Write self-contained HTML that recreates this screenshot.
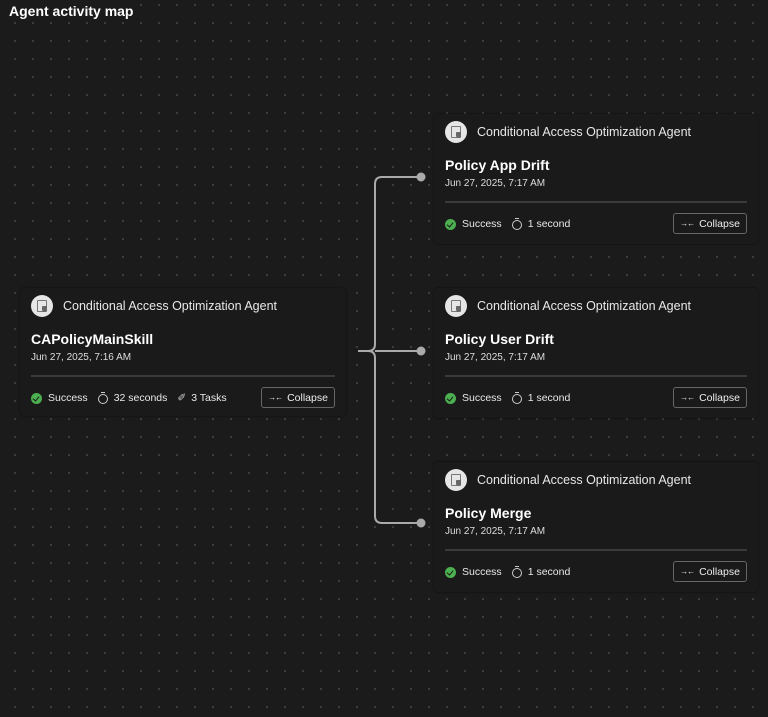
<!DOCTYPE html>
<html><head><style>
body{margin:0;width:768px;height:717px;overflow:hidden;background:#1c1b1b;font-family:"Liberation Sans",sans-serif;color:#fff;position:relative;
background-image:radial-gradient(circle,#444 0.8px,transparent 1.2px);background-size:18px 18px;background-position:6px 32px}
h1{position:absolute;left:9px;top:3px;margin:0;font-size:14px;font-weight:bold;background:#1c1b1b}
.card{position:absolute;background:#1a1a1a;border-radius:4px;box-shadow:0 0 2px rgba(0,0,0,.6)}
.agent{position:absolute;left:11px;top:7px;display:flex;align-items:center;font-size:12.5px;color:#e8e8e8}
.ic{width:22px;height:22px;border-radius:50%;background:#e6e6e6;margin-right:10px;position:relative}
.ic:before{content:"";position:absolute;left:6px;top:5px;width:8px;height:10px;border:1px solid #777;border-radius:1px}
.ic:after{content:"";position:absolute;left:11px;top:11px;width:5px;height:6px;background:#666;border-radius:1px 1px 3px 3px}
.title{position:absolute;left:11px;top:43px;font-size:14px;font-weight:bold}
.date{position:absolute;left:11px;top:64px;font-size:10px;color:#ddd}
.hr{position:absolute;left:11px;right:11px;top:87px;height:2px;background:#3a3a3a}
.foot{position:absolute;left:11px;top:104px;display:flex;align-items:center;font-size:10.5px;color:#e8e8e8}
.ok{width:11px;height:11px;border-radius:50%;background:#4caf50;margin-right:6px;position:relative}
.ok:after{content:"";position:absolute;left:3px;top:2px;width:3px;height:5px;border:solid #1a1a1a;border-width:0 1.3px 1.3px 0;transform:rotate(40deg)}
.tm{width:8px;height:8px;border:1.2px solid #ccc;border-radius:50%;margin:1px 6px 0 10px;position:relative}
.tm:before{content:"";position:absolute;left:2px;top:-3px;width:4px;height:1.2px;background:#ccc}
.btn{position:absolute;right:11px;top:99px;height:21px;width:74px;box-sizing:border-box;border:1px solid #666;border-radius:3px;font-size:10.5px;display:flex;align-items:center;justify-content:center;color:#eee}
.btn span{font-size:8px;margin-right:5px;letter-spacing:-1px}
</style></head><body>
<h1>Agent activity map</h1>
<svg style="position:absolute;left:0;top:0" width="768" height="717">
<path d="M358 351 H368 Q375 351 375 344 V184 Q375 177 382 177 H421 M368 351 Q375 351 375 358 V516 Q375 523 382 523 H421 M375 351 H421" fill="none" stroke="#aaa" stroke-width="2"/>
<circle cx="421" cy="177" r="4.5" fill="#aaa"/><circle cx="421" cy="351" r="4.5" fill="#aaa"/><circle cx="421" cy="523" r="4.5" fill="#aaa"/>
</svg>
<div class="card" style="left:20px;top:288px;width:326px;height:128px">
<div class="agent"><div class="ic"></div>Conditional Access Optimization Agent</div>
<div class="title">CAPolicyMainSkill</div><div class="date">Jun 27, 2025, 7:16 AM</div><div class="hr"></div>
<div class="foot"><div class="ok"></div>Success<div class="tm"></div>32 seconds<span style="margin:0 5px 0 10px;color:#ccc">✐</span>3 Tasks</div>
<div class="btn"><span>→←</span>Collapse</div></div>
<div class="card" style="left:434px;top:114px;width:324px;height:130px">
<div class="agent"><div class="ic"></div>Conditional Access Optimization Agent</div>
<div class="title">Policy App Drift</div><div class="date">Jun 27, 2025, 7:17 AM</div><div class="hr"></div>
<div class="foot"><div class="ok"></div>Success<div class="tm"></div>1 second</div>
<div class="btn"><span>→←</span>Collapse</div></div>
<div class="card" style="left:434px;top:288px;width:324px;height:130px">
<div class="agent"><div class="ic"></div>Conditional Access Optimization Agent</div>
<div class="title">Policy User Drift</div><div class="date">Jun 27, 2025, 7:17 AM</div><div class="hr"></div>
<div class="foot"><div class="ok"></div>Success<div class="tm"></div>1 second</div>
<div class="btn"><span>→←</span>Collapse</div></div>
<div class="card" style="left:434px;top:462px;width:324px;height:130px">
<div class="agent"><div class="ic"></div>Conditional Access Optimization Agent</div>
<div class="title">Policy Merge</div><div class="date">Jun 27, 2025, 7:17 AM</div><div class="hr"></div>
<div class="foot"><div class="ok"></div>Success<div class="tm"></div>1 second</div>
<div class="btn"><span>→←</span>Collapse</div></div>
</body></html>
